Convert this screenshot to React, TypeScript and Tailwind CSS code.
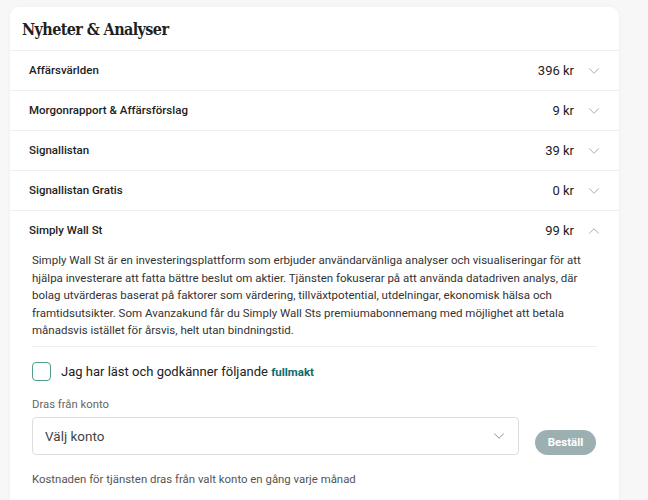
import React from 'react'
import { ChevronDown, ChevronUp } from 'lucide-react'

interface Service {
  name: string
  price: string
  open?: boolean
}

const services: Service[] = [
  { name: 'Affärsvärlden', price: '396 kr' },
  { name: 'Morgonrapport & Affärsförslag', price: '9 kr' },
  { name: 'Signallistan', price: '39 kr' },
  { name: 'Signallistan Gratis', price: '0 kr' },
  { name: 'Simply Wall St', price: '99 kr', open: true },
]

const description =
  'Simply Wall St är en investeringsplattform som erbjuder användarvänliga analyser och visualiseringar för att hjälpa investerare att fatta bättre beslut om aktier. Tjänsten fokuserar på att använda datadriven analys, där bolag utvärderas baserat på faktorer som värdering, tillväxtpotential, utdelningar, ekonomisk hälsa och framtidsutsikter. Som Avanzakund får du Simply Wall Sts premiumabonnemang med möjlighet att betala månadsvis istället för årsvis, helt utan bindningstid.'

const ServiceRow = ({ service }: { service: Service }) => (
  <div className="flex h-10 items-center border-t border-[#efefef] pl-[19px] pr-[16px]">
    <span className="flex-1 text-[11.5px] font-medium text-[#222]">{service.name}</span>
    <span className="text-[13px] text-[#222]">{service.price}</span>
    {service.open ? (
      <ChevronUp className="ml-[11px] h-[18px] w-[18px] text-[#9a9a9a]" strokeWidth={1.1} />
    ) : (
      <ChevronDown className="ml-[11px] h-[18px] w-[18px] text-[#9a9a9a]" strokeWidth={1.1} />
    )}
  </div>
)

const App: React.FC = () => {
  return (
    <div className="min-h-[500px] bg-[#f7f7f7] pl-[10px] pr-[29px] pt-[7px] font-['Roboto',sans-serif]">
      <div className="rounded-t-[9px] bg-white shadow-[0_0_4px_rgba(0,0,0,0.04)]">
        <div className="flex h-[43px] items-end pb-[8px] pl-[12px]">
          <h2 className="font-['DejaVu_Serif_Condensed','DejaVu_Serif',serif] text-[16px] font-bold tracking-[-0.6px] text-[#1f1f1f]">
            Nyheter &amp; Analyser
          </h2>
        </div>
        {services.map((s) => (
          <ServiceRow key={s.name} service={s} />
        ))}

        {/* utfälld tjänst */}
        <div className="px-[22px] pb-[14px] pt-[2px]">
          <p className="max-w-[550px] text-[11.5px] leading-[17.5px] text-[#333]">{description}</p>
          <div className="mt-[6px] border-t border-[#efefef]" />

          <label className="mt-[15px] flex items-center">
            <span className="h-[19px] w-[19px] rounded-[4px] border border-[#4f9e8b]" />
            <span className="ml-[10px] text-[13px] text-[#222]">
              Jag har läst och godkänner följande{' '}
              <span className="text-[11.5px] font-bold text-[#0b6b6e]">fullmakt</span>
            </span>
          </label>

          <div className="mt-[16px] text-[11.3px] text-[#666]">Dras från konto</div>
          <div className="mt-[3px] flex items-end">
            <div className="flex h-[38px] w-[487px] items-center rounded-[4px] border border-[#dedede] pl-[12px] pr-[10px]">
              <span className="flex-1 text-[13.5px] text-[#444]">Välj konto</span>
              <ChevronDown className="h-[18px] w-[18px] text-[#777]" strokeWidth={1.1} />
            </div>
            <button className="ml-[16px] h-[25px] w-[61px] rounded-full bg-[#9cb0b2] text-[11.5px] font-bold text-white">
              Beställ
            </button>
          </div>

          <div className="mt-[16px] text-[11.4px] text-[#555]">
            Kostnaden för tjänsten dras från valt konto en gång varje månad
          </div>
        </div>
      </div>
    </div>
  )
}

export default App
